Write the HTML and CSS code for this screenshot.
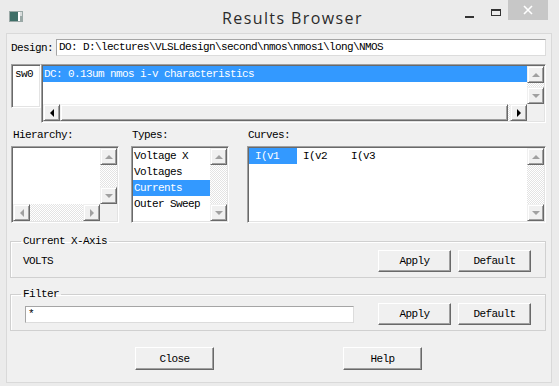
FILE: index.html
```html
<!DOCTYPE html>
<html lang="en">
<head>
    <meta charset="UTF-8">
    <title>Results Browser</title>
    <link rel="stylesheet" href="styles.css">
</head>
<body>
<div class="window">
    <div class="titlebar">
        <svg class="app-icon" width="14" height="11" viewBox="0 0 14 11">
            <rect x="0" y="0" width="14" height="11" fill="#9aa8a6"/>
            <rect x="1" y="1" width="8" height="9" fill="#3f6f68"/>
            <rect x="9" y="1" width="2" height="9" fill="#ffffff"/>
            <rect x="11" y="1" width="2" height="4" fill="#d8dcdc"/>
        </svg>
        <span class="title">Results Browser</span>
        <div class="caption-buttons">
            <span class="cap cap-min"><i></i></span>
            <span class="cap cap-max"><i></i></span>
            <span class="cap cap-close">
                <svg width="10" height="10" viewBox="0 0 10 10">
                    <path d="M1 1 L9 9 M9 1 L1 9" stroke="#fff" stroke-width="1.6"/>
                </svg>
            </span>
        </div>
    </div>

    <div class="client">
        <div class="design-row">
            <span class="design-label">Design:</span>
            <div class="field design-field">DO: D:\lectures\VLSLdesign\second\nmos\nmos1\long\NMOS</div>
        </div>

        <div class="sweep-row">
            <div class="listbox sweep-names">
                <div class="row">sw0</div>
            </div>
            <div class="listbox sweep-list">
                <div class="rows">
                    <div class="row selected">DC: 0.13um nmos i-v characteristics</div>
                </div>
                <div class="vscroll">
                    <span class="sb-btn"><i class="arr up"></i></span>
                    <span class="track"></span>
                    <span class="sb-btn"><i class="arr down"></i></span>
                </div>
                <div class="hscroll">
                    <span class="sb-btn"><i class="arr left on"></i></span>
                    <span class="thumb"></span>
                    <span class="track"></span>
                    <span class="sb-btn"><i class="arr right on"></i></span>
                </div>
                <div class="corner hatched"></div>
            </div>
        </div>

        <div class="lists-row">
            <div class="list-col col-hier">
                <span class="col-label">Hierarchy:</span>
                <div class="listbox box-hier">
                    <div class="rows"></div>
                    <div class="vscroll">
                        <span class="sb-btn"><i class="arr up"></i></span>
                        <span class="track"></span>
                        <span class="sb-btn"><i class="arr down"></i></span>
                    </div>
                    <div class="hscroll">
                        <span class="sb-btn"><i class="arr left"></i></span>
                        <span class="track"></span>
                        <span class="sb-btn"><i class="arr right"></i></span>
                    </div>
                    <div class="corner"></div>
                </div>
            </div>
            <div class="list-col col-types">
                <span class="col-label">Types:</span>
                <div class="listbox box-types">
                    <div class="rows">
                        <div class="row">Voltage X</div>
                        <div class="row">Voltages</div>
                        <div class="row selected">Currents</div>
                        <div class="row">Outer Sweep</div>
                    </div>
                    <div class="vscroll">
                        <span class="sb-btn"><i class="arr up"></i></span>
                        <span class="track"></span>
                        <span class="sb-btn"><i class="arr down"></i></span>
                    </div>
                </div>
            </div>
            <div class="list-col col-curves">
                <span class="col-label">Curves:</span>
                <div class="listbox box-curves">
                    <div class="rows curve-cols">
                        <div class="curve selected">I(v1</div>
                        <div class="curve">I(v2</div>
                        <div class="curve">I(v3</div>
                    </div>
                    <div class="vscroll">
                        <span class="sb-btn"><i class="arr up"></i></span>
                        <span class="track"></span>
                        <span class="sb-btn"><i class="arr down"></i></span>
                    </div>
                </div>
            </div>
        </div>

        <fieldset class="group group-axis">
            <legend>Current X-Axis</legend>
            <div class="group-body">
                <span class="axis-value">VOLTS</span>
                <button class="btn btn-small push-right">Apply</button>
                <button class="btn btn-small">Default</button>
            </div>
        </fieldset>

        <fieldset class="group group-filter">
            <legend>Filter</legend>
            <div class="group-body">
                <div class="field filter-field">*</div>
                <button class="btn btn-small push-right">Apply</button>
                <button class="btn btn-small">Default</button>
            </div>
        </fieldset>

        <div class="bottom-row">
            <button class="btn btn-wide">Close</button>
            <button class="btn btn-wide btn-help">Help</button>
        </div>
    </div>
</div>
</body>
</html>
```

FILE: styles.css
```css
body {
    margin: 0;
    font-family: "Liberation Mono", "DejaVu Sans Mono", monospace;
    font-size: 11px;
    letter-spacing: -0.6px;
    color: #000;
    background: #ebebeb;
}
.window {
    width: 559px;
    height: 386px;
    background: #ebebeb;
    display: flex;
    flex-direction: column;
}

/* title bar */
.titlebar {
    height: 33px;
    display: flex;
    align-items: flex-start;
    flex-shrink: 0;
}
.app-icon {
    margin: 11px 0 0 9px;
}
.title {
    margin: 8px 0 0 199px;
    font-family: "Open Sans", "Noto Sans", sans-serif;
    font-size: 16px;
    line-height: 20px;
    letter-spacing: 1.4px;
    color: #2b2b2b;
}
.caption-buttons {
    margin-left: auto;
    margin-right: 11px;
    display: flex;
}
.cap {
    height: 20px;
    display: flex;
    align-items: center;
    justify-content: center;
}
.cap-min {
    width: 27px;
}
.cap-min i {
    width: 9px;
    height: 2px;
    margin-top: 13px;
    background: #333;
}
.cap-max {
    width: 25px;
}
.cap-max i {
    width: 10px;
    height: 7px;
    margin-top: 4px;
    box-sizing: border-box;
    border: 1px solid #333;
    border-top-width: 2px;
}
.cap-close {
    width: 40px;
    background: #c7c7c7;
}

/* client area */
.client {
    flex: 1;
    margin: 0 7px 3px 6px;
    border: 1px solid #d9d9d9;
    background: #f0f0f0;
    display: flex;
    flex-direction: column;
}
.design-row {
    margin: 5px 0 0 4px;
    height: 17px;
    display: flex;
    align-items: center;
}
.design-label {
    width: 45px;
}
.field {
    box-sizing: border-box;
    height: 17px;
    line-height: 15px;
    padding-left: 2px;
    background: #fff;
    border: 1px solid;
    border-color: #a5a5a5 #dcdcdc #dcdcdc #a5a5a5;
    white-space: nowrap;
}
.design-field {
    width: 490px;
}

/* list boxes */
.listbox {
    box-sizing: border-box;
    border: 1px solid;
    border-color: #a0a0a0 #fff #fff #a0a0a0;
    padding: 1px;
    box-shadow: inset 1px 1px #696969, inset -1px -1px #e3e3e3;
    background: #fff;
}
.row {
    height: 16px;
    line-height: 16px;
    padding-left: 1px;
    white-space: nowrap;
}
.selected {
    background: #3399ff;
    color: #fff;
}
.sweep-row {
    margin: 8px 0 0 4px;
    height: 59px;
    display: flex;
    align-items: flex-start;
}
.sweep-names {
    width: 30px;
    height: 44px;
}
.sweep-names .row {
    padding-left: 2px;
}
.sweep-list {
    width: 505px;
    height: 59px;
    display: grid;
    grid-template-columns: 1fr 17px;
    grid-template-rows: 1fr 17px;
}

/* scroll bars */
.vscroll {
    display: flex;
    flex-direction: column;
}
.hscroll {
    display: flex;
}
.track, .hatched {
    flex: 1;
    background-color: #fff;
    background-image: conic-gradient(#e3e3e3 25%, #fff 0 50%, #e3e3e3 0 75%, #fff 0);
    background-size: 2px 2px;
}
.corner {
    background: #f0f0f0;
}
.sb-btn, .thumb {
    box-sizing: border-box;
    width: 17px;
    height: 17px;
    flex-shrink: 0;
    border: 1px solid;
    border-color: #f0f0f0 #696969 #696969 #f0f0f0;
    box-shadow: inset 1px 1px #fff, inset -1px -1px #a0a0a0;
    background: #f0f0f0;
    display: flex;
    align-items: center;
    justify-content: center;
}
.thumb {
    width: 448px;
}
.arr {
    width: 0;
    height: 0;
    border: 4px solid transparent;
}
.arr.up {
    border-top: 0;
    border-bottom-color: #a0a0a0;
}
.arr.down {
    border-bottom: 0;
    border-top-color: #a0a0a0;
}
.arr.left {
    border-left: 0;
    border-right-color: #a0a0a0;
}
.arr.right {
    border-right: 0;
    border-left-color: #a0a0a0;
}
.arr.left.on {
    border-right-color: #000;
}
.arr.right.on {
    border-left-color: #000;
}

/* hierarchy / types / curves */
.lists-row {
    margin: 6px 0 0 4px;
    display: flex;
}
.list-col {
    display: flex;
    flex-direction: column;
    gap: 5px;
}
.col-label {
    height: 12px;
    line-height: 12px;
    padding-left: 2px;
}
.col-hier {
    width: 108px;
}
.col-types {
    width: 98px;
    margin-left: 12px;
}
.col-types .col-label, .col-curves .col-label {
    padding-left: 1px;
}
.col-curves {
    width: 299px;
    margin-left: 18px;
}
.box-hier, .box-types, .box-curves {
    height: 77px;
    display: grid;
    grid-template-columns: 1fr 17px;
}
.box-hier {
    grid-template-rows: 1fr 17px;
}
.curve-cols {
    display: flex;
    align-items: flex-start;
}
.curve {
    width: 48px;
    height: 16px;
    line-height: 16px;
    padding-left: 6px;
    box-sizing: border-box;
}

/* group boxes */
.group {
    margin: 12px 0 0 3px;
    width: 536px;
    box-sizing: border-box;
    padding: 0;
    border: 1px solid #d0d0d0;
    box-shadow: inset 1px 1px #fff;
    min-width: 0;
}
.group-filter {
    margin-top: 10px;
}
.group legend {
    margin-left: 10px;
    padding: 0 2px;
    height: 12px;
    line-height: 12px;
}
.group-body {
    display: flex;
    align-items: center;
    padding: 3px 14px 5px 12px;
    height: 22px;
}
.push-right {
    margin-left: auto;
}
.filter-field {
    margin-left: 2px;
    width: 329px;
}

/* buttons */
.btn {
    box-sizing: border-box;
    font-family: inherit;
    font-size: 11px;
    letter-spacing: -0.6px;
    color: #000;
    padding: 0;
    background: #f0f0f0;
    border: 1px solid;
    border-color: #fff #696969 #696969 #fff;
    box-shadow: inset -1px -1px #a0a0a0;
}
.btn-small {
    width: 73px;
    height: 22px;
}
.btn-small + .btn-small {
    margin-left: 7px;
}
.bottom-row {
    margin: 16px 0 0 128px;
    display: flex;
}
.btn-wide {
    width: 79px;
    height: 23px;
}
.btn-help {
    margin-left: 129px;
}
```
